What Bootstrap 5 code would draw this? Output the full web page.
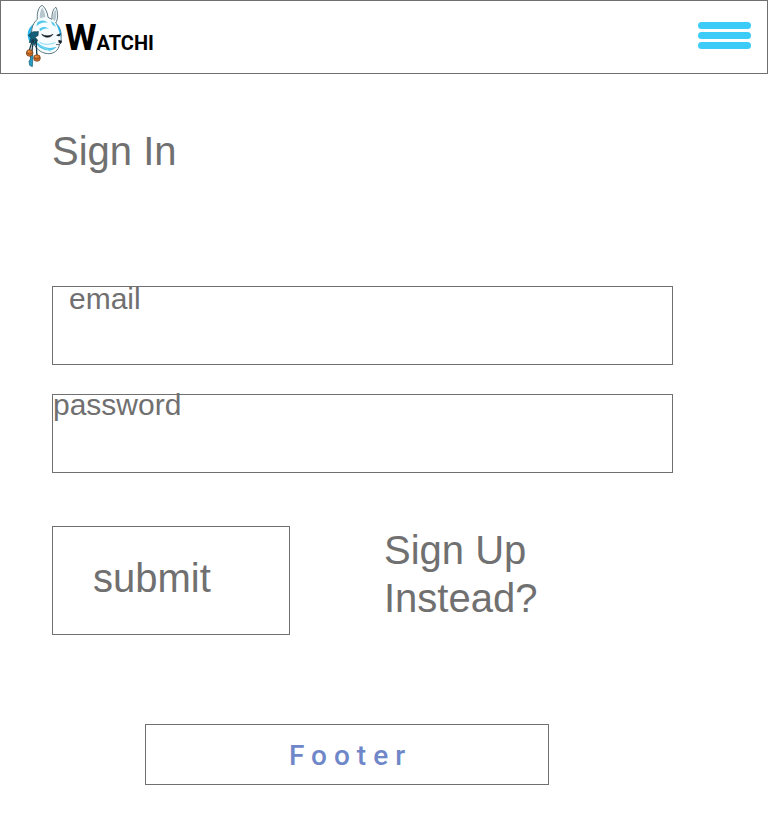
<!DOCTYPE html>
<html lang="en">
<head>
<meta charset="utf-8">
<meta name="viewport" content="width=device-width, initial-scale=1">
<title>Watchi - Sign In</title>
<link href="https://cdn.jsdelivr.net/npm/bootstrap@5.3.0/dist/css/bootstrap.min.css" rel="stylesheet">
<style>
  :root { --ink: #707070; }
  body { font-family: "Liberation Sans", Arial, sans-serif; color: var(--ink); background: #fff; }
  .outlined { border: 1px solid var(--ink); }
  .site-header { padding: 3px 16px 5px 24px; }
  .wordmark { font-family: Roboto, sans-serif; font-weight: 700; font-size: 20px; line-height: 48px; color: #000; padding-top: 8px; }
  .wordmark-initial { font-size: 36px; }
  .menu-toggle { padding: 0 0 2px; border: 0; }
  .page-body { padding: 53px 95px 0 52px; }
  .display-text { font-size: 40px; line-height: 48px; font-weight: 400; }
  .form-title { margin-bottom: 111px; }
  .field { height: 79px; margin: 0 0 29px; }
  .field-label { font-size: 30px; line-height: 24px; padding-left: 16px; }
  .field-label-flush { line-height: 20px; padding-left: 0; }
  .field-input { border: 0; background: transparent; color: var(--ink); font-size: 24px; padding: 0 16px; outline: 0; min-height: 0; }
  .actions { margin-top: 53px; }
  .submit-btn { width: 238px; height: 109px; padding: 0 0 6px 40px; border-radius: 0; color: var(--ink); text-align: left; }
  .signup-link { color: var(--ink); max-width: 200px; margin-left: 94px; }
  .site-footer { width: 404px; max-width: 80%; height: 61px; margin: 89px 0 24px 145px; padding: 2px 0 0 7px; font-family: Roboto, sans-serif; font-weight: 500; font-size: 28px; letter-spacing: 7px; color: #6f87c8; }
</style>
</head>
<body>
<header class="site-header outlined d-flex align-items-center justify-content-between">
  <a href="#" class="d-flex align-items-center text-decoration-none" aria-label="Watchi home">
    <svg width="40" height="64" viewBox="30 12 120 192" aria-hidden="true">
      <circle cx="76" cy="104" r="38" fill="#29b5ea"/>
      <path d="M67 58C65 37 72 18 82 16C92 25 98 39 99 52L111 58C110 40 115 24 123 22C130 37 129 59 122 69C135 80 141 99 138 116L140 127L133 134C131 151 117 162 98 161C76 159 60 144 54 124C45 99 50 71 67 58Z" fill="#f7fdff" stroke="#607984" stroke-width="3"/>
      <path d="M74 55C74 39 77 28 82 23C89 34 91 43 91 51ZM114 58C114 43 118 31 122 29C126 41 124 55 119 64Z" fill="#b8c7cd"/>
      <path d="M67 67C81 58 91 60 99 69C84 65 75 70 64 79ZM107 64L116 68L123 80L113 75ZM56 113C67 130 82 142 107 144L125 140C117 151 106 152 96 151C75 147 61 134 56 113ZM73 86C84 78 92 80 102 86C91 84 82 87 75 94Z" fill="#54c9ed"/>
      <path d="M122 70C136 80 141 99 137 113C134 98 129 82 122 70Z" fill="#29b5ea"/>
      <path d="M72 135L108 154M73 126C89 137 105 133 121 128" fill="none" stroke="#80d9f2" stroke-width="3"/>
      <path d="M80 103C91 109 103 109 114 103C105 115 89 114 80 103ZM125 106L136 101L133 108ZM131 121L139 123L137 130L132 128Z" fill="#111b22" stroke="#111b22" stroke-width="2"/>
      <path d="M123 134L134 133" stroke="#252f36" stroke-width="2"/>
      <path d="M48 99C57 91 65 98 70 94L69 107L60 111L68 121L60 134L53 124L43 128L48 113L40 106Z" fill="#155e78" stroke="#0b394c" stroke-width="2"/>
      <path d="M56 117C54 139 47 153 48 195M62 118C67 138 62 149 67 170M53 118L43 151" fill="none" stroke="#173a48" stroke-width="4"/>
      <path d="M48 160L54 166L52 200L44 196L42 184L46 178Z" fill="#279cc0" stroke="#155b72" stroke-width="2"/>
      <circle cx="44" cy="159" r="10" fill="#d8742a" stroke="#60310f" stroke-width="2"/>
      <circle cx="66" cy="174" r="10" fill="#d8742a" stroke="#60310f" stroke-width="2"/>
      <path d="M35 158L44 163L53 157M57 173L66 178L75 172" fill="none" stroke="#63310f" stroke-width="2"/>
      <circle cx="41" cy="154" r="2" fill="#f3b365"/><circle cx="63" cy="169" r="2" fill="#f3b365"/>
    </svg>
    <span class="wordmark"><span class="wordmark-initial">W</span>ATCHI</span>
  </a>
  <button type="button" class="menu-toggle bg-transparent d-flex" aria-label="Menu">
    <svg width="53" height="27" viewBox="0 0 53 27" fill="#3dcbf8" aria-hidden="true">
      <rect width="53" height="7" rx="3.5"/><rect y="10" width="53" height="7" rx="3.5"/><rect y="20" width="53" height="7" rx="3.5"/>
    </svg>
  </button>
</header>
<main class="page-body">
  <h1 class="form-title display-text">Sign In</h1>
  <form>
    <div class="field outlined d-flex flex-column">
      <label class="field-label" for="email">email</label>
      <input class="field-input w-100 flex-grow-1" type="email" id="email">
    </div>
    <div class="field outlined d-flex flex-column">
      <label class="field-label field-label-flush" for="password">password</label>
      <input class="field-input w-100 flex-grow-1" type="password" id="password">
    </div>
    <div class="actions d-flex align-items-start">
      <button type="submit" class="submit-btn btn outlined display-text flex-shrink-0">submit</button>
      <a href="#" class="signup-link display-text text-decoration-none">Sign Up Instead?</a>
    </div>
  </form>
</main>
<footer class="site-footer outlined d-flex align-items-center justify-content-center">Footer</footer>
<script src="https://cdn.jsdelivr.net/npm/bootstrap@5.3.0/dist/js/bootstrap.bundle.min.js"></script>
</body>
</html>
